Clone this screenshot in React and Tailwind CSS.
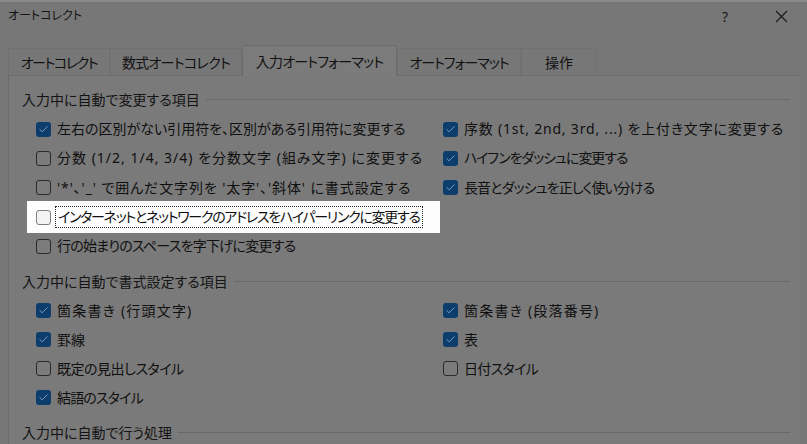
import { Check } from 'lucide-react'

const font = "font-['Noto_Sans','Noto_Sans_CJK_JP',sans-serif] [font-feature-settings:'palt']"

const tabs = [
  { label: 'オートコレクト', w: 'w-[102px]', tr: 'tracking-[-1.4px]' },
  { label: '数式オートコレクト', w: 'w-[132px]', tr: 'tracking-[-0.7px]' },
  { label: '入力オートフォーマット', w: 'w-[155px]', tr: 'tracking-[-0.8px]', active: true },
  { label: 'オートフォーマット', w: 'w-[124px]', tr: 'tracking-[-1px]' },
  { label: '操作', w: 'w-[76px]', tr: '' },
]

// [left label, checked, left tracking, right label, checked, right tracking, focused]
const group1 = [
  ['左右の区別がない引用符を、区別がある引用符に変更する', true, '', '序数 (1st, 2nd, 3rd, ...) を上付き文字に変更する', true, 'tracking-[0.8px]'],
  ['分数 (1/2, 1/4, 3/4) を分数文字 (組み文字) に変更する', false, 'tracking-[1px]', 'ハイフンをダッシュに変更する', true, 'tracking-[-1.05px]'],
  ["'*'、'_' で囲んだ文字列を '太字'、'斜体' に書式設定する", false, 'tracking-[0.9px]', '長音とダッシュを正しく使い分ける', true, 'tracking-[-0.9px]'],
  ['インターネットとネットワークのアドレスをハイパーリンクに変更する', false, 'tracking-[-1.3px]', null, false, '', true],
  ['行の始まりのスペースを字下げに変更する', false, 'tracking-[-0.75px]', null, false, ''],
]

const group2 = [
  ['箇条書き (行頭文字)', true, 'tracking-[1.2px]', '箇条書き (段落番号)', true, 'tracking-[1.2px]'],
  ['罫線', true, '', '表', true, ''],
  ['既定の見出しスタイル', false, 'tracking-[-0.5px]', '日付スタイル', false, 'tracking-[-0.7px]'],
  ['結語のスタイル', true, 'tracking-[-0.85px]', null, false, ''],
]

function Box({ checked, light }) {
  if (checked) {
    return (
      <span className="w-[15px] h-[15px] shrink-0 rounded-[3px] bg-[#0d3d6c] flex items-center justify-center">
        <Check size={11} strokeWidth={1.6} className="text-[#a9bfd6]" />
      </span>
    )
  }
  return (
    <span className={`w-[15px] h-[15px] shrink-0 rounded-[3px] border ${light ? 'border-[#7e7e7e] bg-[#f3f3f3]' : 'border-[#2a2a2a] bg-[#7b7b7b]'}`} />
  )
}

function Item({ label, checked, tr, focused }) {
  if (!label) return <div />
  return (
    <div className="flex items-center gap-[6px] h-full">
      <Box checked={checked} light={focused} />
      <span className={`text-[14px] leading-[20px] text-[#101010] whitespace-nowrap ${tr} ${focused ? 'border border-dotted border-[#222] px-[2px] -ml-[2px]' : ''}`}>{label}</span>
    </div>
  )
}

function Header({ children, className = '' }) {
  return (
    <div className={`flex items-center h-[20px] pl-[13px] pr-[10px] ${className}`}>
      <span className="text-[14px] text-[#141414] whitespace-nowrap">{children}</span>
      <span className="flex-1 h-px bg-[#696969] ml-[6px]" />
    </div>
  )
}

function Rows({ rows, rowH }) {
  return (
    <div className="flex flex-col pl-[18px]">
      {rows.map(([l, lc, ltr, r, rc, rtr, focus], i) => (
        <div key={i} className={`grid grid-cols-[413px_1fr] ${rowH}`}>
          <div className={`pl-[9px] ${focus ? 'bg-[#fdfdfd] -my-[1.5px]' : ''}`}>
            <Item label={l} checked={lc} tr={ltr} focused={focus} />
          </div>
          <div className="pl-[3px]">
            <Item label={r} checked={rc} tr={rtr} />
          </div>
        </div>
      ))}
    </div>
  )
}

export default function App() {
  return (
    <div className={`w-[807px] h-[444px] overflow-hidden bg-[#777777] border-t-2 border-[#8a8a8a] ${font}`}>
      {/* title bar */}
      <div className="flex items-center h-[28px] pl-[8px]">
        <span className="text-[12px] text-[#141414]">オートコレクト</span>
        <span className="ml-auto text-[14px] text-[#181818] mr-[47px]">?</span>
        <svg width="13" height="13" viewBox="0 0 13 13" className="mr-[19px]">
          <path d="M1 1L12 12M12 1L1 12" stroke="#1a1a1a" strokeWidth="1.1" />
        </svg>
      </div>

      {/* tabs */}
      <div className="flex items-end h-[45px] pl-[8px]">
        {tabs.map(t => (
          <div
            key={t.label}
            className={`${t.w} ${t.tr} flex items-center justify-center text-[14px] text-[#121212] border-t border-x ${
              t.active
                ? 'h-[31px] -mb-px bg-[#7b7b7b] border-[#6c6c6c] relative z-10'
                : 'h-[27px] bg-[#777777] border-[#717171]'
            }`}
          >
            {t.label}
          </div>
        ))}
      </div>

      {/* panel */}
      <div className="ml-[8px] w-[792px] h-[400px] bg-[#7a7a7a] border-t border-l border-[#6c6c6c] pt-[13px]">
        <Header>入力中に自動で変更する項目</Header>
        <div className="mt-[5.5px]">
          <Rows rows={group1} rowH="h-[29.3px]" />
        </div>
        <Header className="mt-[11px]">入力中に自動で書式設定する項目</Header>
        <div className="mt-[4.5px]">
          <Rows rows={group2} rowH="h-[29px]" />
        </div>
        <Header className="mt-[10.5px]">入力中に自動で行う処理</Header>
      </div>
    </div>
  )
}
